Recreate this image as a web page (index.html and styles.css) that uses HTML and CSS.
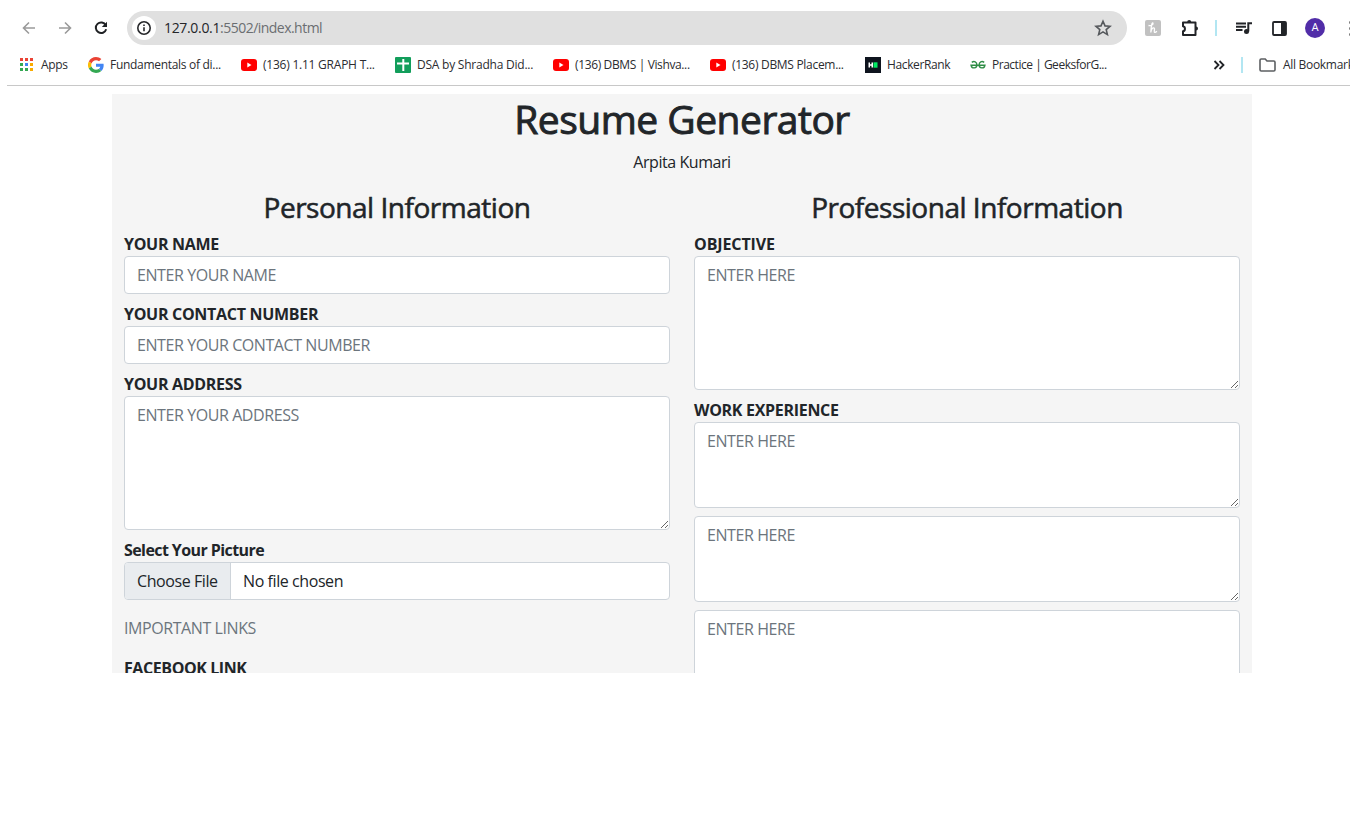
FILE: index.html
```html
<!DOCTYPE html>
<html lang="en">
<head>
<meta charset="utf-8">
<title>Resume Generator</title>
<link rel="stylesheet" href="styles.css">
</head>
<body>
<header class="browser">
  <div class="toolbar">
    <svg class="nav back" viewBox="0 0 16 16"><path d="M14 8H3M8 2.500 2.500 8 8 13.500"/></svg>
    <svg class="nav forward" viewBox="0 0 16 16"><path d="M2 8h11M8 2.500 13.500 8 8 13.500"/></svg>
    <svg class="nav reload" viewBox="0 0 16 16"><path d="M12.800 5.200A5.300 5.300 0 1 0 13.200 9.300"/><path class="solid" d="M14 1.800v5.200H8.800z"/></svg>
    <div class="omnibox">
      <span class="site-info"><svg viewBox="0 0 16 16"><circle cx="8" cy="8" r="6.200"/><path d="M8 7.300v4M8 4.500v1.500"/></svg></span>
      <span class="url"><b>127.0.0.1</b>:5502/index.html</span>
      <svg class="star" viewBox="0 0 18 18"><path d="M9 2.200 11 6.900l5 .4-3.800 3.300 1.200 5L9 12.900l-4.400 2.700 1.200-5L2 7.300l5-.4z"/></svg>
    </div>
    <svg class="honey" viewBox="0 0 16 16"><rect width="16" height="16" rx="2"/><path d="M3.500 5.500C6 6 8.500 4.500 8 3.200 7.300 2.200 6.300 4 5.800 12.500 6.200 9.800 7.500 7.800 8.800 7.900c1.700.2-.4 4.100.8 4.500.9.200 1.700-.5 2.200-1.200"/></svg>
    <svg class="puzzle" viewBox="0 0 18 18"><path d="M2 3.500h12.500v12.500H2v-3.700c2.600-.4 2.600-4.700 0-5.100z"/><path class="nub" d="M6.200 3a2 2 0 0 1 4 0zM15 7.600a2 2 0 0 1 0 4z"/></svg>
    <span class="divider"></span>
    <svg class="media" viewBox="0 0 16 14"><path d="M0 2.500h10M0 5.800h10M0 9.100h6.500M12.300 10.500V2.300H16"/><circle cx="10.500" cy="10.600" r="2.500"/></svg>
    <svg class="panel" viewBox="0 0 15 15"><rect x="1" y="1" width="13" height="13" rx="1"/><path d="M9 1h5v13H9z"/></svg>
    <span class="avatar">A</span>
    <span class="menu"><i></i><i></i><i></i></span>
  </div>
  <nav class="bookmarks">
    <a class="mark"><svg viewBox="0 0 16 16"><path fill="#ea4335" d="M0 1h3v3H0zm5 0h3v3H5zm5 0h3v3h-3z"/><path fill="#34a853" d="M0 6h3v3H0zm0 5h3v3H0zm5 0h3v3H5z"/><path fill="#4285f4" d="M5 6h3v3H5z"/><path fill="#f9ab00" d="M10 6h3v3h-3zm0 5h3v3h-3z"/></svg><span>Apps</span></a>
    <a class="mark"><svg viewBox="0 0 48 48"><path fill="#ea4335" d="M24 9.500c3.500 0 6.700 1.200 9.200 3.600l6.900-6.900C35.900 2.400 30.500 0 24 0 14.600 0 6.500 5.400 2.600 13.200l8 6.200C12.400 13.700 17.700 9.500 24 9.500z"/><path fill="#4285f4" d="M47 24.600c0-1.600-.2-3.100-.4-4.600H24v9h12.900c-.6 3-2.300 5.500-4.800 7.200l7.700 6C44.400 38 47 31.800 47 24.600z"/><path fill="#fbbc05" d="M10.500 28.600a14.500 14.500 0 0 1 0-9.200l-8-6.200a24 24 0 0 0 0 21.600z"/><path fill="#34a853" d="M24 48c6.500 0 11.900-2.100 15.900-5.800l-7.700-6c-2.200 1.500-4.900 2.300-8.200 2.300-6.300 0-11.600-4.200-13.500-9.900l-8 6.200C6.500 42.600 14.600 48 24 48z"/></svg><span>Fundamentals of di...</span></a>
    <a class="mark loose"><svg viewBox="0 0 16 16"><rect y="2" width="16" height="12" rx="3" fill="red"/><path fill="#fff" d="m6.300 5.500 4.200 2.500-4.200 2.500z"/></svg><span>(136) 1.11 GRAPH T...</span></a>
    <a class="mark loose"><svg viewBox="0 0 16 16"><rect width="16" height="16" rx="1" fill="#129e5b"/><path fill="#fff" d="M2 5.500h5.300V2h2v3.500H14v2H9.300V14h-2V7.500H2z"/></svg><span>DSA by Shradha Did...</span></a>
    <a class="mark tight"><svg viewBox="0 0 16 16"><rect y="2" width="16" height="12" rx="3" fill="red"/><path fill="#fff" d="m6.300 5.500 4.200 2.500-4.200 2.500z"/></svg><span>(136) DBMS | Vishva...</span></a>
    <a class="mark"><svg viewBox="0 0 16 16"><rect y="2" width="16" height="12" rx="3" fill="red"/><path fill="#fff" d="m6.300 5.500 4.200 2.500-4.200 2.500z"/></svg><span>(136) DBMS Placem...</span></a>
    <a class="mark tight"><svg viewBox="0 0 16 16"><path fill="#0e141e" d="M0 0h16v16H0z"/><path fill="#fff" d="M3.500 5.500H5v1.700h1.500V5.500H8v5H6.500V8.800H5v1.700H3.500z"/><path fill="#00ea64" d="M8.500 5.300h4v5.400h-4z"/></svg><span>HackerRank</span></a>
    <a class="mark tighter"><svg viewBox="0 0 16 16"><path fill="none" stroke="#2f8d46" stroke-width="1.400" d="M1.800 5.400C4 3.600 7 4.800 6.900 8c0 3.300-5 4.300-5.800.3h13.800c-.8 4-5.800 3-5.800-.3C9 4.800 12 3.600 14.200 5.400"/></svg><span>Practice | GeeksforG...</span></a>
    <svg class="more" viewBox="0 0 12 10"><path d="m1.500 1 4 4-4 4m5-8 4 4-4 4"/></svg>
    <span class="divider"></span>
    <svg class="folder" viewBox="0 0 17 14"><path d="M1 2.200Q1 1 2.200 1h4l1.800 2h6.800Q16 3 16 4.200v7.600Q16 13 14.800 13H2.200Q1 13 1 11.800z"/></svg>
    <span>All Bookmarks</span>
  </nav>
</header>
<main class="container">
  <h1 class="title">Resume Generator</h1>
  <p class="author">Arpita Kumari</p>
  <div class="row">
    <section class="col">
      <h3 class="heading">Personal Information</h3>
      <div class="group"><label class="label">YOUR NAME</label><input class="control" placeholder="ENTER YOUR NAME"></div>
      <div class="group"><label class="label">YOUR CONTACT NUMBER</label><input class="control" placeholder="ENTER YOUR CONTACT NUMBER"></div>
      <div class="group"><label class="label">YOUR ADDRESS</label><textarea class="control" rows="5" placeholder="ENTER YOUR ADDRESS"></textarea></div>
      <div class="group"><label class="label picture">Select Your Picture</label><div class="control file"><span class="choose">Choose File</span><span class="chosen">No file chosen</span></div></div>
      <p class="links">IMPORTANT LINKS</p>
      <div class="group"><label class="label facebook">FACEBOOK LINK</label><input class="control"></div>
    </section>
    <section class="col">
      <h3 class="heading">Professional Information</h3>
      <div class="group"><label class="label objective">OBJECTIVE</label><textarea class="control" rows="5" placeholder="ENTER HERE"></textarea></div>
      <div class="group"><label class="label">WORK EXPERIENCE</label><textarea class="control" rows="3" placeholder="ENTER HERE"></textarea></div>
      <div class="group"><textarea class="control" rows="3" placeholder="ENTER HERE"></textarea></div>
      <div class="group"><textarea class="control" rows="3" placeholder="ENTER HERE"></textarea></div>
    </section>
  </div>
</main>
</body>
</html>
```
FILE: styles.css
```css
* { box-sizing: border-box; }
html, body { height: 822px; overflow: hidden; }
body { margin: 0; background: #fff; color: #212529; font: 400 16px/24px "Open Sans", sans-serif; }
svg { display: block; flex: none; fill: none; }

.browser { height: 86px; margin-left: 7px; border-bottom: 1px solid #c8c8c8; }
.toolbar { display: flex; align-items: center; height: 45px; padding: 11px 0 0 14px; overflow: hidden; }
.nav { width: 16px; height: 16px; margin-right: 20px; stroke: #9a9a9a; stroke-width: 1.6; }
.reload { margin-right: 18px; stroke: #1f2124; stroke-width: 2; }
.solid { fill: #1f2124; stroke: none; }
.omnibox { display: flex; align-items: center; width: 1000px; height: 34px; flex: none; padding: 0 15px 0 5px; border-radius: 17px; background: #e0e0e0; }
.site-info { display: grid; place-items: center; width: 24px; height: 24px; border-radius: 50%; background: #fff; }
.site-info svg { width: 16px; height: 16px; stroke: #27282b; stroke-width: 1.6; }
.url { flex: 1; margin-left: 8px; color: #6b6e71; font-size: 14px; letter-spacing: -.53px; }
.url b { color: #242529; font-weight: 400; letter-spacing: -.33px; }
.star { width: 18px; height: 18px; stroke: #55585c; stroke-width: 1.6; }
.honey { width: 16px; height: 16px; margin-left: 18px; }
.honey rect { fill: #c1c1c1; }
.honey path { stroke: #fff; stroke-width: 1.3; }
.puzzle { width: 18px; height: 18px; margin-left: 20px; stroke: #222428; stroke-width: 2; stroke-linejoin: round; }
.puzzle .nub { fill: #222428; stroke: none; }
.divider { flex: none; width: 2px; height: 16px; background: #b2e6f2; }
.toolbar .divider { margin: 0 19px 0 16px; }
.media { width: 16px; height: 14px; stroke: #222428; stroke-width: 2; }
.media circle { fill: #222428; stroke: none; }
.panel { width: 15px; height: 15px; margin-left: 20px; stroke: #222428; stroke-width: 1.8; }
.panel path { fill: #222428; stroke: none; }
.avatar { flex: none; width: 20px; height: 20px; margin-left: 18px; border-radius: 50%; background: #512da8; color: #fff; font: 11px/20px Roboto, sans-serif; text-align: center; }
.menu { display: grid; gap: 3px; margin-left: 24px; flex: none; }
.menu i { width: 3px; height: 3px; border-radius: 50%; background: #777; }

.bookmarks { display: grid; grid-template-columns: 69px 153px 154px 158px 157px 155px 105px 243px 28px 18px 24px 90px; align-items: center; height: 40px; padding-left: 12px; overflow: hidden; color: #2b2c30; font-size: 12px; line-height: 16px; white-space: nowrap; letter-spacing: -.3px; }
.mark { display: flex; align-items: center; gap: 6px; }
.mark:first-child svg { margin-left: 1px; margin-right: -1px; }
.loose { letter-spacing: -.23px; }
.tight { letter-spacing: -.37px; }
.tighter { letter-spacing: -.48px; }
.mark svg { width: 16px; height: 16px; }
.more { width: 12px; height: 10px; stroke: #222428; stroke-width: 1.8; }
.folder { width: 17px; height: 14px; stroke: #5c5f62; stroke-width: 1.6; }

.container { width: 1140px; height: 579px; margin: 8px 0 0 112px; overflow: hidden; background: #f5f5f5; }
.title { margin: 0 0 7px; padding-top: 1px; font-size: 39px; line-height: 48px; font-weight: 400; text-align: center; letter-spacing: -.5px; -webkit-text-stroke: .9px #212529; }
.author { margin: 0 0 16px; text-align: center; letter-spacing: -.45px; line-height: 24px; }
.row { display: flex; }
.col { width: 570px; padding: 0 12px; }
.heading { margin: 0; height: 42px; font-size: 28px; line-height: 34px; font-weight: 400; text-align: center; letter-spacing: -.48px; -webkit-text-stroke: .55px #212529; }
.group { margin-bottom: 8px; }
.label { display: block; font-weight: 700; letter-spacing: -.3px; }
.picture { letter-spacing: -.58px; }
.facebook { letter-spacing: -.42px; }
.objective { letter-spacing: -.1px; }
.control { display: block; width: 100%; margin: 0; padding: 6px 12px; border: 1px solid #ced4da; border-radius: 4px; background: #fff; color: #212529; font: inherit; letter-spacing: -.42px; }
input.control { height: 38px; }
.control::placeholder { color: #6c757d; opacity: 1; }
.file { display: flex; height: 38px; padding: 0; overflow: hidden; }
.choose { width: 106px; padding: 6px 12px; border-right: 1px solid #ced4da; background: #e9ecef; white-space: nowrap; }
.chosen { padding: 6px 12px; }
.links { margin: 16px 0; color: #6c757d; letter-spacing: -.42px; }
```
